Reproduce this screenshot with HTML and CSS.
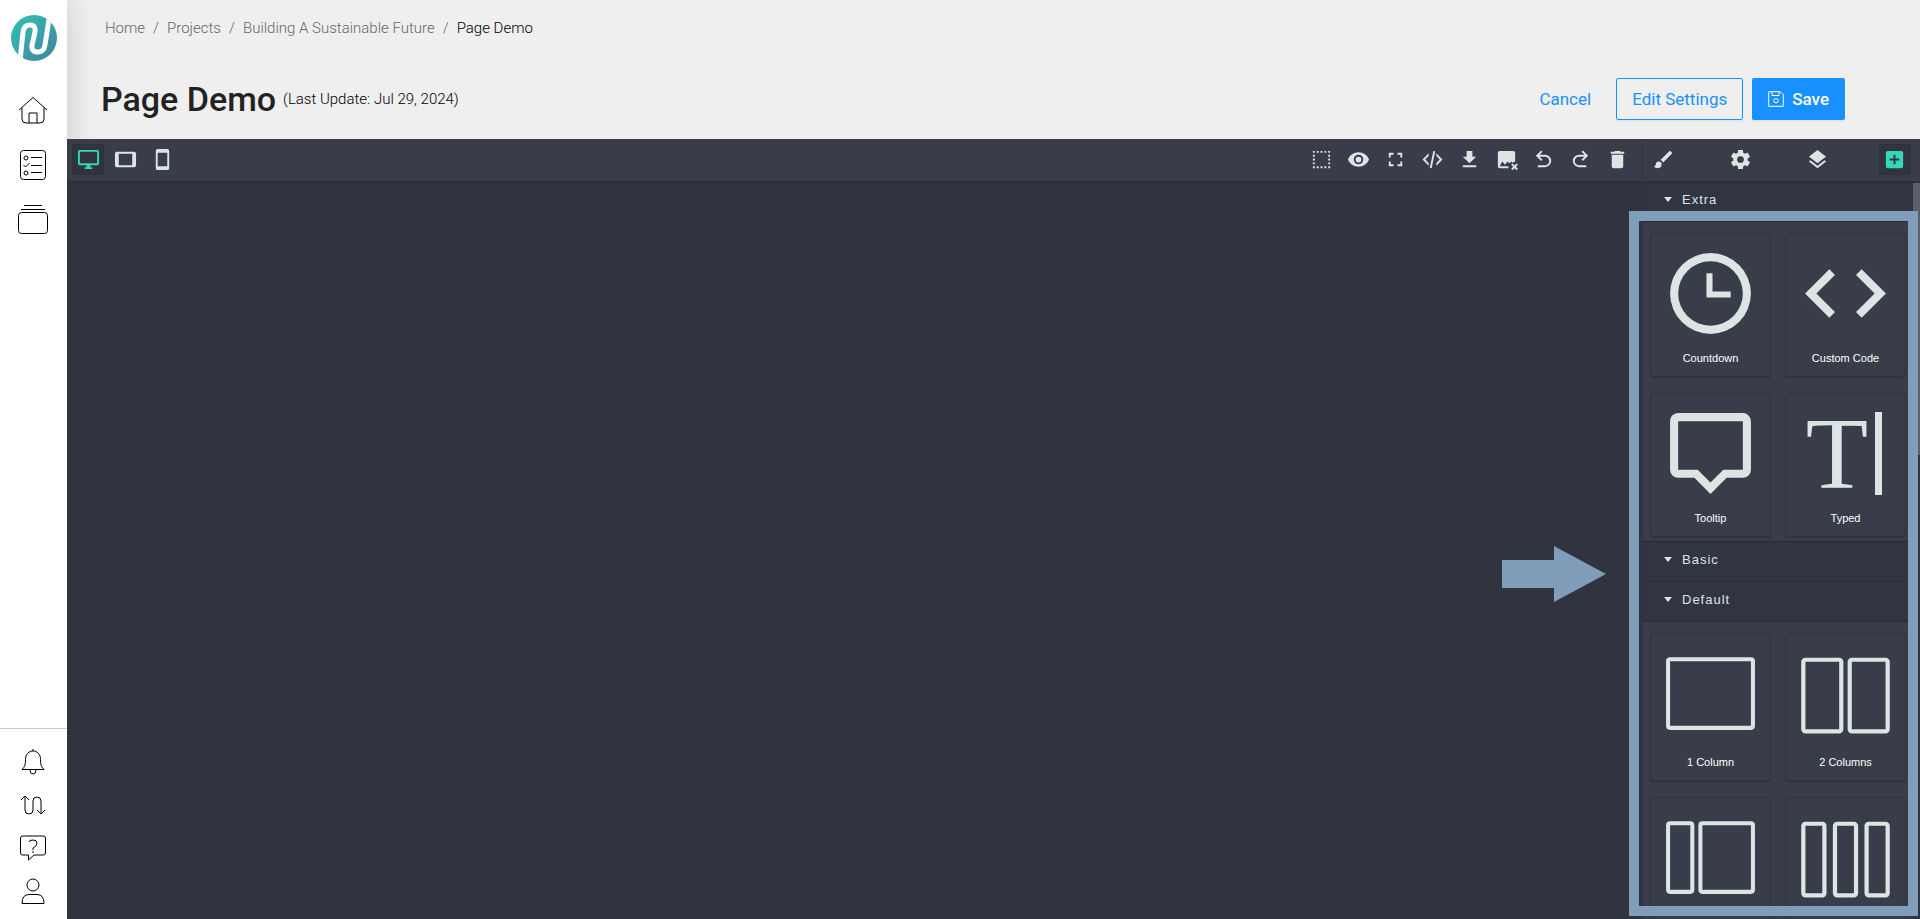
FILE: index.html
```
<!DOCTYPE html>
<html lang="en">
<head>
    <meta charset="UTF-8" />
    <meta name="viewport" content="width=device-width, initial-scale=1" />
    <title>Page Demo</title>
    <link rel="stylesheet" href="styles.css">
</head>
<body>

    <nav class="sidebar">
        <a href="#" class="logo" aria-label="Dashboard">
            <svg viewBox="0 0 46 46" width="46" height="46">
                <defs>
                    <linearGradient id="logo-fill" x1="0" y1="0" x2="1" y2="1">
                        <stop offset="0.2" stop-color="#35b5b0" />
                        <stop offset="1" stop-color="#4382a0" />
                    </linearGradient>
                    <clipPath id="logo-clip"><circle cx="23" cy="23" r="23" /></clipPath>
                </defs>
                <circle cx="23" cy="23" r="23" fill="url(#logo-fill)" />
                <g clip-path="url(#logo-clip)" fill="none" stroke="#fff" stroke-width="5">
                    <path d="M9 46 L12 17 Q13 10 19 10 Q25 10 24 17 L21 30 Q20 37 27 37 Q33 37 34 30 L39 -2" />
                </g>
            </svg>
        </a>

        <div class="side-main">
            <a href="#" aria-label="Home">
                <svg class="line-icon" viewBox="0 0 30 30"><path d="M1 14 15 1.500 29 14M4 11.500V23q0 4 4 4h14q4 0 4-4V11.500M11 27V17h8v10" /></svg>
            </a>
            <a href="#" aria-label="Tasks">
                <svg class="line-icon" viewBox="0 0 30 30"><rect x="2.500" y="0.500" width="25" height="29" rx="3" /><circle cx="8" cy="8" r="2" /><circle cx="8" cy="23" r="2" /><path d="M13 7.500h11M13 15.500h11M13 22.500h11M5.500 15l2 2 4-4" /></svg>
            </a>
            <a href="#" aria-label="Collections">
                <svg class="line-icon" viewBox="0 0 30 30"><rect x="0.500" y="8.500" width="29" height="21" rx="3" /><path d="M6 1.500h18M3 5.500h24" /></svg>
            </a>
        </div>

        <div class="side-bottom">
            <a href="#" aria-label="Notifications">
                <svg class="line-icon" viewBox="0 0 26 26"><path d="M13 0v2M2 20.500h22c-3-3-3.500-5-3.500-10C20.500 5 17 2 13 2s-7.500 3-7.500 8.500c0 5-.5 7-3.500 10zM10 21q0 4 3 4t3-4" /></svg>
            </a>
            <a href="#" aria-label="Workflows">
                <svg class="line-icon" viewBox="0 0 26 26"><path d="M1 8l4-4 4 4M5 4v14q0 4 4 4t4-4V9q0-4 4-4t4 4v13M17 18l4 4 4-4" /></svg>
            </a>
            <a href="#" aria-label="Help">
                <svg class="line-icon" viewBox="0 0 26 26"><path d="M2.500 1h21q2 0 2 2v15q0 2-2 2H14l-5.500 5V20h-6q-2 0-2-2V3q0-2 2-2zM9 7q0-2 4-2t4 3-4 5v2M13 16v2" /></svg>
            </a>
            <a href="#" aria-label="Account">
                <svg class="line-icon" viewBox="0 0 26 26"><circle cx="13" cy="7" r="6" /><path d="M2 25.500q0-9 7-9h8q7 0 7 9z" /></svg>
            </a>
        </div>
    </nav>

    <div class="page">

        <header class="page-header">
            <nav class="breadcrumb">
                <a href="#">Home</a><span>/</span>
                <a href="#">Projects</a><span>/</span>
                <a href="#">Building A Sustainable Future</a><span>/</span>
                <strong>Page Demo</strong>
            </nav>
            <div class="title-row">
                <h1>Page Demo</h1>
                <p class="updated">(Last Update: Jul 29, 2024)</p>
                <div class="actions">
                    <button type="button" class="btn btn-link">Cancel</button>
                    <button type="button" class="btn btn-outline">Edit Settings</button>
                    <button type="button" class="btn btn-primary">
                        <svg viewBox="0 0 16 16" width="16" height="16" fill="none" stroke="currentColor"><path d="M.7.700h11.600l3 3v11.600H.7zM4 .7v3.800h7V.7" /><circle cx="8" cy="9.700" r="2.200" /></svg>
                        Save
                    </button>
                </div>
            </div>
        </header>

        <div class="editor">

            <main class="canvas-area">
                <div class="toolbar">
                    <div class="tools">
                        <button type="button" class="tool active" aria-label="Desktop"><svg viewBox="0 0 24 24"><path d="M21 16H3V4h18m0-2H3c-1.110 0-2 .89-2 2v12a2 2 0 0 0 2 2h7v2H8v2h8v-2h-2v-2h7a2 2 0 0 0 2-2V4a2 2 0 0 0-2-2z" /></svg></button>
                        <button type="button" class="tool" aria-label="Tablet"><svg viewBox="0 0 24 24"><path d="M19 18H5V6h14m2-2H3c-1.100 0-2 .9-2 2v12a2 2 0 0 0 2 2h18a2 2 0 0 0 2-2V6a2 2 0 0 0-2-2z" /></svg></button>
                        <button type="button" class="tool" aria-label="Mobile"><svg viewBox="0 0 24 24"><path d="M17 19H7V5h10m0-4H7c-1.110 0-2 .89-2 2v18a2 2 0 0 0 2 2h10a2 2 0 0 0 2-2V3a2 2 0 0 0-2-2z" /></svg></button>
                    </div>
                    <div class="tools">
                        <button type="button" class="tool" aria-label="Show borders"><svg viewBox="0 0 24 24"><path d="M15 5h2V3h-2m0 18h2v-2h-2M11 5h2V3h-2m8 2h2V3h-2m0 6h2V7h-2m0 14h2v-2h-2m0-6h2v-2h-2m0 6h2v-2h-2M3 5h2V3H3m0 6h2V7H3m0 6h2v-2H3m0 6h2v-2H3m0 6h2v-2H3m8 2h2v-2h-2m-4 2h2v-2H7M7 5h2V3H7z" /></svg></button>
                        <button type="button" class="tool" aria-label="Preview"><svg viewBox="0 0 24 24"><path d="M12 9a3 3 0 0 0 0 6 3 3 0 0 0 0-6m0 8a5 5 0 0 1 0-10 5 5 0 0 1 0 10m0-12.500C7 4.500 2.730 7.610 1 12c1.730 4.390 6 7.500 11 7.500s9.270-3.110 11-7.500c-1.730-4.390-6-7.500-11-7.500z" /></svg></button>
                        <button type="button" class="tool" aria-label="Fullscreen"><svg viewBox="0 0 24 24"><path d="M5 5h5v2H7v3H5V5m9 0h5v5h-2V7h-3V5m3 9h2v5h-5v-2h3v-3m-7 3v2H5v-5h2v3h3z" /></svg></button>
                        <button type="button" class="tool" aria-label="View code"><svg viewBox="0 0 24 24"><path d="M12.890 3l1.960.4L11.110 21l-1.960-.4L12.890 3m6.700 9L16 8.410V5.580L22.420 12 16 18.410v-2.830L19.590 12M1.580 12L8 5.580v2.830L4.410 12 8 15.580v2.830L1.580 12z" /></svg></button>
                        <button type="button" class="tool" aria-label="Import"><svg viewBox="0 0 24 24"><path d="M5 20h14v-2H5m14-9h-4V3H9v6H5l7 7 7-7z" /></svg></button>
                        <button type="button" class="tool" aria-label="Remove image"><svg viewBox="0 0 24 24"><path d="M21 14V5a2 2 0 0 0-2-2H5a2 2 0 0 0-2 2v14a2 2 0 0 0 2 2h9v-2H5l2.500-5 3 3.500 2.500-3.500 2 2 2-2 1 1.500z" /><path d="M22.500 16.100l-2.100 2.100-2.100-2.100-1.400 1.400 2.100 2.100-2.100 2.100 1.400 1.400 2.100-2.100 2.100 2.100 1.400-1.400-2.100-2.100 2.100-2.100z" /></svg></button>
                        <button type="button" class="tool" aria-label="Undo"><svg viewBox="0 0 24 24"><path d="M20 13.500a6.500 6.500 0 0 1-6.500 6.500H6v-2h7.500a4.500 4.500 0 0 0 0-9H7.830l3.080 3.090L9.500 13.500 4 8l5.500-5.500 1.420 1.410L7.830 7h5.670a6.500 6.500 0 0 1 6.500 6.500z" /></svg></button>
                        <button type="button" class="tool" aria-label="Redo"><svg viewBox="0 0 24 24"><path d="M4 13.500a6.500 6.500 0 0 0 6.500 6.500H18v-2h-7.500a4.500 4.500 0 0 1 0-9h5.670l-3.080 3.090 1.410 1.410L20 8l-5.500-5.500-1.420 1.410L16.170 7H10.500A6.500 6.500 0 0 0 4 13.500z" /></svg></button>
                        <button type="button" class="tool" aria-label="Clear canvas"><svg viewBox="0 0 24 24"><path d="M19 4h-3.500l-1-1h-5l-1 1H5v2h14M6 19a2 2 0 0 0 2 2h8a2 2 0 0 0 2-2V7H6v12z" /></svg></button>
                    </div>
                </div>
                <div class="canvas"></div>
            </main>

            <aside class="panel">
                <div class="toolbar panel-tabs">
                    <button type="button" class="tool" aria-label="Styles"><svg viewBox="0 0 24 24"><path d="M20.710 4.630l-1.340-1.340a1 1 0 0 0-1.410 0L9 12.250 11.750 15l8.960-8.960a1 1 0 0 0 0-1.410M7 14a3 3 0 0 0-3 3c0 1.310-1.160 2-2 2 .92 1.220 2.500 2 4 2a4 4 0 0 0 4-4 3 3 0 0 0-3-3z" /></svg></button>
                    <button type="button" class="tool" aria-label="Settings"><svg viewBox="0 0 24 24"><path d="M12 15.500a3.500 3.500 0 1 1 0-7 3.500 3.500 0 0 1 0 7m7.430-2.530c.04-.32.07-.64.07-.97s-.03-.66-.07-1l2.110-1.630c.19-.15.240-.42.120-.64l-2-3.460c-.12-.22-.39-.31-.61-.22l-2.490 1c-.52-.39-1.060-.73-1.690-.98l-.37-2.650A.506.506 0 0 0 14 2h-4c-.25 0-.46.180-.5.420l-.37 2.650c-.63.250-1.170.590-1.690.980l-2.490-1c-.22-.09-.49 0-.61.220l-2 3.460c-.13.220-.07.490.120.640L4.570 11c-.04.340-.07.670-.07 1s.03.650.07.970l-2.110 1.660c-.19.150-.25.420-.12.640l2 3.460c.12.220.39.300.61.220l2.490-1.010c.52.400 1.060.740 1.690.990l.37 2.650c.04.240.25.420.5.420h4c.25 0 .46-.18.500-.42l.37-2.650c.63-.26 1.170-.59 1.690-.99l2.490 1.010c.22.080.49 0 .61-.22l2-3.460c.12-.22.070-.49-.12-.64l-2.110-1.660z" /></svg></button>
                    <button type="button" class="tool" aria-label="Layers"><svg viewBox="0 0 24 24"><path d="M12 16l7.360-5.730L21 9l-9-7-9 7 1.630 1.270M12 18.540l-7.380-5.730L3 14.070l9 7 9-7-1.630-1.270L12 18.540z" /></svg></button>
                    <button type="button" class="tool active" aria-label="Blocks"><svg viewBox="0 0 24 24"><path d="M17 13h-4v4h-2v-4H7v-2h4V7h2v4h4m2-8H5a2 2 0 0 0-2 2v14a2 2 0 0 0 2 2h14a2 2 0 0 0 2-2V5a2 2 0 0 0-2-2z" /></svg></button>
                </div>

                <div class="panel-body">
                    <div class="block-list">
                        <button type="button" class="category">Extra</button>
                        <div class="blocks">
                            <button type="button" class="block">
                                <svg viewBox="0 0 24 24"><path d="M12 20a8 8 0 0 0 0-16 8 8 0 0 0 0 16m0-18a10 10 0 0 1 0 20 10 10 0 0 1 0-20m5 11h-6V7h1.500v4.500H17z" /></svg>
                                Countdown
                            </button>
                            <button type="button" class="block">
                                <svg viewBox="0 0 24 24"><path d="M14.600 16.600l4.600-4.600-4.600-4.600L16 6l6 6-6 6-1.400-1.400m-5.200 0L4.800 12l4.600-4.600L8 6l-6 6 6 6 1.400-1.400z" /></svg>
                                Custom Code
                            </button>
                            <button type="button" class="block">
                                <svg viewBox="0 0 24 24"><path d="M4 2h16a2 2 0 0 1 2 2v12a2 2 0 0 1-2 2h-4l-4 4-4-4H4a2 2 0 0 1-2-2V4c0-1.100.9-2 2-2m0 2v12h4.830L12 19.170 15.170 16H20V4H4z" /></svg>
                                Tooltip
                            </button>
                            <button type="button" class="block">
                                <svg viewBox="0 0 97 97" aria-hidden="true"><text class="type-glyph" x="40" y="83">T</text><path d="M78 7h7v83h-7z" /></svg>
                                Typed
                            </button>
                        </div>

                        <button type="button" class="category">Basic</button>

                        <button type="button" class="category">Default</button>
                        <div class="blocks">
                            <button type="button" class="block">
                                <svg class="outline" viewBox="0 0 24 24"><rect x="1.500" y="3.500" width="21" height="17" rx="0.500" /></svg>
                                1 Column
                            </button>
                            <button type="button" class="block">
                                <svg class="outline" viewBox="0 0 23 24"><rect x="1.500" y="3.500" width="9" height="17" rx="0.500" /><rect x="12.500" y="3.500" width="9" height="17" rx="0.500" /></svg>
                                2 Columns
                            </button>
                            <button type="button" class="block" aria-label="2 Columns 3/7">
                                <svg class="outline" viewBox="0 0 24 24"><rect x="1.500" y="3.500" width="6" height="17" rx="0.500" /><rect x="9.500" y="3.500" width="13" height="17" rx="0.500" /></svg>
                            </button>
                            <button type="button" class="block" aria-label="3 Columns">
                                <svg class="outline" viewBox="0 0 23 24"><rect x="1.500" y="3.500" width="5" height="17" rx="0.500" /><rect x="9" y="3.500" width="5" height="17" rx="0.500" /><rect x="16.500" y="3.500" width="5" height="17" rx="0.500" /></svg>
                            </button>
                        </div>
                    </div>
                    <div class="scrollbar"><div class="thumb"></div></div>
                </div>

                <!-- Callout over the block list -->
                <div class="callout"></div>
                <svg class="callout-arrow" viewBox="0 0 104 56" width="104" height="56"><path d="M0 14h52V0l52 28-52 28V42H0z" /></svg>
            </aside>

        </div>
    </div>

</body>
</html>
```
FILE: styles.css
```
* {
    box-sizing: border-box;
}

body {
    margin: 0;
    height: 100vh;
    display: flex;
    overflow: hidden;
    font-family: Roboto, sans-serif;
    font-size: 15px;
    color: #222;
    background: #efefef;
}

button {
    font: inherit;
    border: none;
    background: none;
    cursor: pointer;
}

a {
    color: inherit;
    text-decoration: none;
}

svg {
    display: block;
}

/* Left navigation */
.sidebar {
    flex: none;
    width: 67px;
    display: flex;
    flex-direction: column;
    background: #fff;
    box-shadow: 0 0 32px rgba(0, 0, 0, 0.15);
}

.logo {
    margin: 15px auto 0 11px;
}

.side-main {
    display: flex;
    flex-direction: column;
    align-items: center;
    gap: 24px;
    padding: 35px 1px 0 0;
}

.side-bottom {
    display: flex;
    flex-direction: column;
    align-items: center;
    gap: 17px;
    margin-top: auto;
    padding: 20px 1px 15px 0;
    border-top: 1px solid #ccc;
}

.line-icon {
    width: 30px;
    height: 30px;
    fill: none;
    stroke: #000;
    stroke-width: 1;
}

.side-bottom .line-icon {
    width: 26px;
    height: 26px;
}

.page {
    flex: 1;
    min-width: 0;
    display: flex;
    flex-direction: column;
}

/* Header */
.page-header {
    height: 139px;
    padding: 18px 75px 0 34px;
}

.breadcrumb {
    display: flex;
    gap: 8px;
    padding-left: 4px;
    line-height: 20px;
    font-weight: 300;
    color: #666;
}

.breadcrumb strong {
    font-weight: 300;
    color: #000;
}

.title-row {
    display: flex;
    align-items: center;
    margin-top: 40px;
}

h1 {
    margin: 0;
    font-size: 34px;
    font-weight: 500;
    line-height: 42px;
}

.updated {
    margin: 0 0 0 7px;
    font-weight: 300;
    color: #000;
}

.actions {
    display: flex;
    gap: 9px;
    margin-left: auto;
}

.btn {
    display: flex;
    align-items: center;
    gap: 8px;
    height: 42px;
    padding: 0 15px;
    border: 1px solid transparent;
    border-radius: 2px;
    font-size: 17px;
    color: #1890ff;
}

.btn-outline {
    border-color: #1890ff;
    box-shadow: 0 2px 0 rgba(0, 0, 0, 0.04);
}

.btn-primary {
    background: #1890ff;
    color: #fff;
    font-weight: 500;
    box-shadow: 0 2px 0 rgba(0, 0, 0, 0.04);
}

/* Page editor */
.editor {
    flex: 1;
    min-height: 0;
    display: flex;
    background: #30343f;
}

.canvas-area {
    flex: 1;
    min-width: 0;
}

.toolbar {
    position: relative;
    display: flex;
    justify-content: space-between;
    height: 43px;
    padding: 5px 9px 6px 5px;
    background: #383d49;
    border-bottom: 1px solid #2d313b;
    box-shadow: 0 1px 0 #2d313b;
}

.tools {
    display: flex;
    gap: 5px;
}

.tool {
    display: flex;
    align-items: center;
    justify-content: center;
    width: 32px;
    height: 31px;
    padding: 0;
    border-radius: 2px;
    fill: #dae5e4;
}

.tool svg {
    width: 23px;
    height: 23px;
}

.tool.active {
    background: #30343e;
    border: 1px solid #2d313b;
    fill: #35d7bb;
}

/* Blocks panel */
.panel {
    position: relative;
    flex: none;
    width: 278px;
    display: flex;
    flex-direction: column;
    border-left: 1px solid #2f333e;
    background: #383d49;
}

.panel-tabs {
    padding-left: 4px;
}

.panel-body {
    flex: 1;
    min-height: 0;
    display: flex;
}

.block-list {
    flex: 1;
    overflow-y: auto;
    scrollbar-width: none;
    font-family: "Liberation Sans", Arial, sans-serif;
}

.scrollbar {
    width: 7px;
    background: #30343f;
}

.thumb {
    height: 37%;
    background: #5b5f69;
}

.category {
    display: flex;
    align-items: center;
    gap: 10px;
    width: 100%;
    height: 40px;
    padding: 0 21px 4px;
    background: #303541;
    border-bottom: 1px solid #282c35;
    font-size: 13px;
    letter-spacing: 1px;
    color: #dae5e4;
}

.category::before {
    content: "";
    border: 4px solid transparent;
    border-top: 5px solid #dae5e4;
    border-bottom: none;
}

.blocks {
    display: grid;
    grid-template-columns: 1fr 1fr;
    gap: 16px 14px;
    padding: 11px 7px 4px;
    border-bottom: 1px solid #282c35;
}

.block {
    display: flex;
    flex-direction: column;
    justify-content: space-between;
    align-items: center;
    gap: 10px;
    min-height: 144px;
    padding: 11px;
    border: 1px solid #2f333d;
    border-radius: 3px;
    box-shadow: 0 1px 0 #2f333d;
    font-size: 11px;
    line-height: 13px;
    color: #fff;
}

.block svg {
    width: 100%;
    overflow: visible;
    fill: #dae5e4;
}

.block .outline {
    fill: none;
    stroke: #dae5e4;
}

.type-glyph {
    font-family: "Liberation Serif", serif;
    font-size: 102px;
    text-anchor: middle;
}

.callout {
    position: absolute;
    top: 72px;
    right: 2px;
    bottom: 3px;
    left: -14px;
    border: 10px solid #809db9;
    pointer-events: none;
}

.callout-arrow {
    position: absolute;
    top: 407px;
    right: 314px;
    fill: #809db9;
}
```
